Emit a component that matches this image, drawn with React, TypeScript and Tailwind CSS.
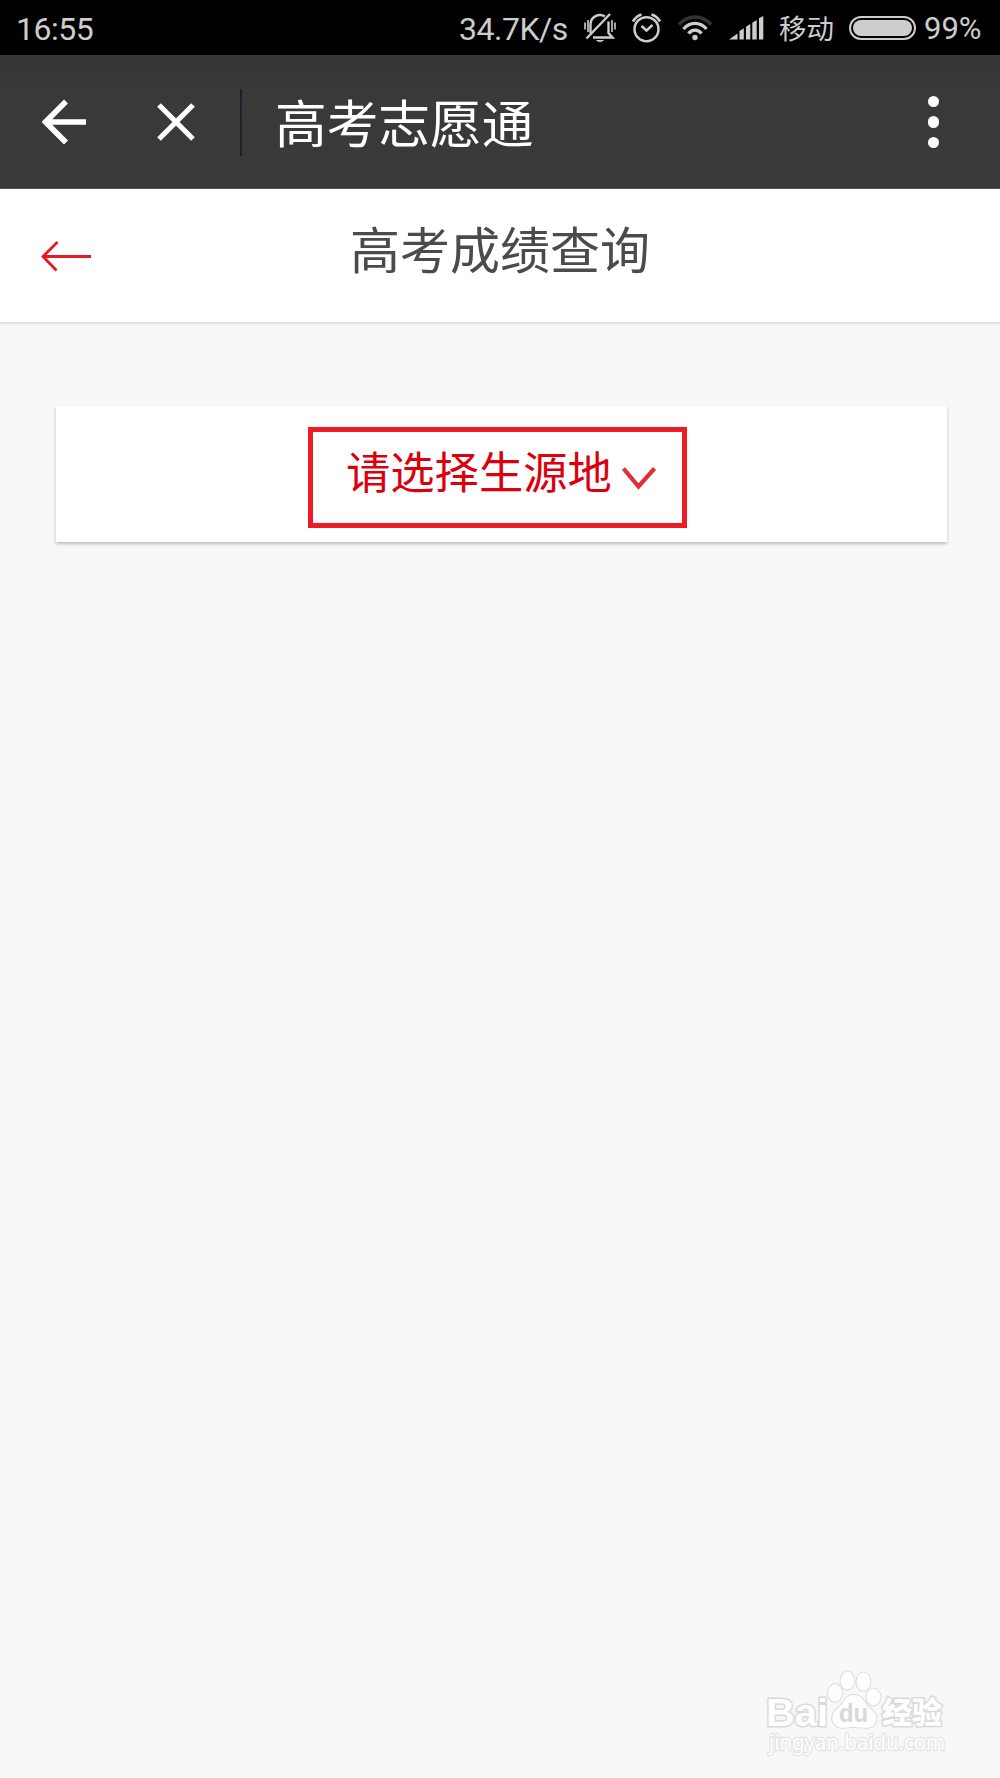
function BellOff() {
  return (
    <svg width="32" height="30" viewBox="0 0 32 30" fill="none" stroke="#cdcdcd" strokeWidth="2.400" className="ml-[15px]">
      <path d="M6.500 20V11a9.500 9.500 0 0 1 14.500-7.500M24.500 8.500V20l4 4.500H9" />
      <path d="M2.500 25.500 26 1" strokeWidth="2.400" />
      <path d="M1 9.500v7M4 7v12M28 7v12M31 9.500v7" strokeWidth="1.600" />
      <path d="M12 27h8c-1.500 2.600-6.500 2.600-8 0z" fill="#cdcdcd" stroke="none" />
    </svg>
  );
}

function AlarmClock() {
  return (
    <svg width="30" height="30" viewBox="0 0 30 30" fill="none" stroke="#cdcdcd" strokeWidth="2.500" className="ml-4">
      <circle cx="14.500" cy="16.200" r="12" />
      <path d="m9.500 13 5 4.500 6-5.500" />
      <path d="M1 8.500C3 5 6 2.500 9.500 1.500M28 8.500C26 5 23 2.500 19.500 1.500" strokeWidth="2.800" />
    </svg>
  );
}

function Wifi() {
  return (
    <svg width="36" height="28" viewBox="0 0 36 28" fill="none" stroke="#cdcdcd" strokeWidth="3.400" className="ml-[15px]">
      <path d="M2 10.500C11 0.500 25 0.500 34 10.500" stroke="#333333" />
      <path d="M6.500 15C13 7.500 23 7.500 29.500 15" />
      <path d="M11.500 19.500C15 15 21 15 24.500 19.500" />
      <circle cx="18" cy="23.500" r="2.700" fill="#cdcdcd" stroke="none" />
    </svg>
  );
}

function Signal() {
  return (
    <svg width="35" height="24" viewBox="0 0 35 24" fill="#cdcdcd" className="ml-4">
      <path d="M0 23.500 8.500 17.500V23.500zM10.500 15 14.800 12.200V23.500H10.500zM17 10.800 21.300 8V23.500H17zM23.300 6.700 27.700 4V23.500H23.300zM30 2.300 34.300 0V23.500H30z" />
    </svg>
  );
}

function StatusBar() {
  return (
    <div className="flex h-[55px] items-center bg-black pt-px pr-[15px] pl-4 font-['Roboto','Noto_Sans_CJK_SC',sans-serif] text-[32px] leading-none text-[#cdcdcd]">
      <span className="mr-auto pt-px tracking-[-0.5px]">16:55</span>
      <span className="w-[110px] pt-px tracking-[-0.5px] whitespace-nowrap">34.7K/s</span>
      <BellOff />
      <AlarmClock />
      <Wifi />
      <Signal />
      <span className="ml-[15px] w-[56px] pt-[3px] text-[27.500px] whitespace-nowrap">移动</span>
      <span className="ml-[14px] h-6 w-[67px] rounded-full border-2 border-[#cdcdcd] p-[2px]">
        <span className="block h-full rounded-full bg-[#cdcdcd]" />
      </span>
      <span className="ml-[8px] w-[61px] pt-px text-[31px] whitespace-nowrap">99%</span>
    </div>
  );
}

function AppBar() {
  return (
    <div className="flex h-[134px] items-center border-b border-[#555355] bg-linear-to-b from-[#353535] via-[#393939] via-30% to-[#3a3a3a] pt-px pl-[42px] pr-[61px]">
      <svg width="44" height="46" viewBox="0 0 44 46" fill="none" stroke="#fff" strokeWidth="5.600">
        <path d="M44 23H4M24 2.500 3.500 23 24 43.500" />
      </svg>
      <svg width="38" height="38" viewBox="0 0 38 38" fill="none" stroke="#fff" strokeWidth="5.200" className="ml-[71px]">
        <path d="m2 2 34 34M36 2 2 36" />
      </svg>
      <div className="ml-[45px] h-[67px] w-[2px] bg-[#1d1e2e]" />
      <h1 className="ml-[33px] pb-[3px] text-[51.700px] leading-[60px] text-white">高考志愿通</h1>
      <div className="ml-auto flex flex-col gap-[9px]">
        <span className="size-[11.500px] rounded-full bg-white" />
        <span className="size-[11.500px] rounded-full bg-white" />
        <span className="size-[11.500px] rounded-full bg-white" />
      </div>
    </div>
  );
}

function PageHeader() {
  return (
    <div className="grid h-[133px] grid-cols-[1fr_auto_1fr] items-center bg-white px-[42px] shadow-[0_1px_3px_rgba(0,0,0,0.18)]">
      <svg width="50" height="31" viewBox="0 0 50 31" fill="none" stroke="#e31b22" strokeWidth="2.800" className="mt-[2px] -ml-px">
        <path d="M50 15.500H2" />
        <path d="M16.500 1 2 15.500 15.500 29.500" />
      </svg>
      <h2 className="pb-[17px] text-[50px] leading-[60px] text-[#484c4c]">高考成绩查询</h2>
    </div>
  );
}

function RegionSelect() {
  return (
    <div className="mt-[84px] mr-[53px] ml-[56px] flex h-[136px] bg-white pt-[21px] pl-[252px] shadow-[0_2px_3px_rgba(0,0,0,0.24)]">
      <button className="flex h-[101px] w-[379px] border-5 border-[#ee1c25] pt-[8px] pl-[33px] text-[#dc000c]">
        <span className="text-[44.300px] leading-[60px] whitespace-nowrap">请选择生源地</span>
        <svg width="34" height="23" viewBox="0 0 34 23" fill="none" stroke="#df3038" strokeWidth="4.200" className="mt-[27px] ml-[10px]">
          <path d="M1.500 1.500 16.500 19.500 32.500 1.500" />
        </svg>
      </button>
    </div>
  );
}

function Watermark() {
  return (
    <svg width="190" height="96" viewBox="0 0 190 96" className="absolute top-[1665px] left-[760px]" fill="#fefefe" stroke="#dadada" strokeWidth="3" paintOrder="stroke">
      <text x="6" y="61" fontSize="39" fontWeight="700" textLength="62" lengthAdjust="spacingAndGlyphs" fontFamily="Liberation Sans, sans-serif">Bai</text>
      <g strokeWidth="1.800">
        <ellipse cx="75" cy="28" rx="7" ry="9" />
        <ellipse cx="87.500" cy="15.500" rx="7" ry="9.300" />
        <ellipse cx="103.500" cy="16.800" rx="7" ry="9.200" />
        <ellipse cx="113.500" cy="32" rx="7" ry="8.500" />
        <path d="M94 30c-9 0-10 8-17 14-6 5-6 12-2 16 5 5 12 2 19 2s15 3 20-2c4-5 3-11-3-16-7-6-8-14-17-14z" />
      </g>
      <text x="79" y="57" fontSize="25" fontWeight="700" fill="#d8d8d8" stroke="none" textLength="29" lengthAdjust="spacingAndGlyphs" fontFamily="Liberation Sans, sans-serif">du</text>
      <text x="122" y="58" fontSize="30" fontWeight="900" fontFamily="Noto Sans CJK SC, sans-serif">经验</text>
      <text x="9" y="85" fontSize="21" strokeWidth="2.400" stroke="#e4e4e4" textLength="176" lengthAdjust="spacingAndGlyphs" fontFamily="Noto Sans, sans-serif">jingyan.baidu.com</text>
    </svg>
  );
}

export default function App() {
  return (
    <div className="relative h-[1778px] w-[1000px] overflow-hidden bg-[#f8f8f8] font-['Noto_Sans_CJK_SC',sans-serif]">
      <StatusBar />
      <AppBar />
      <PageHeader />
      <RegionSelect />
      <Watermark />
    </div>
  );
}
